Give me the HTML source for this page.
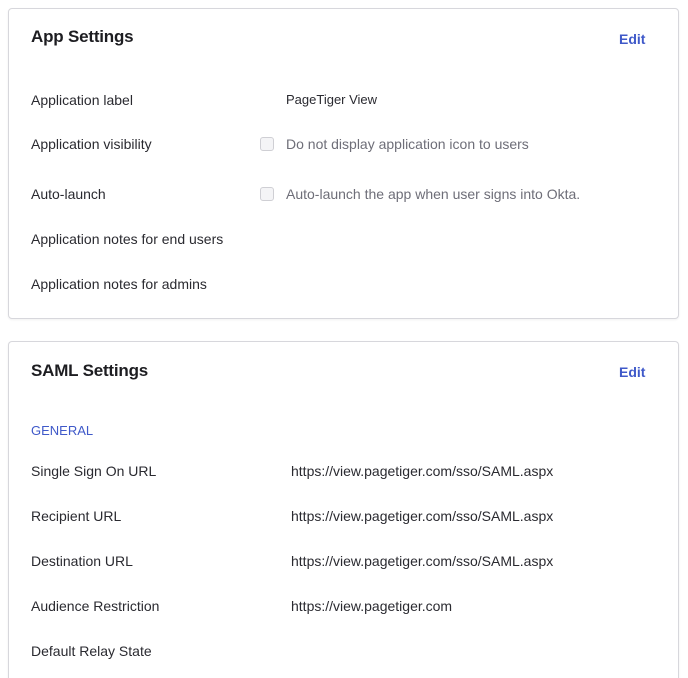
<!DOCTYPE html>
<html style="overflow:hidden;height:678px"><head><style>
body{margin:0;width:688px;height:678px;overflow:hidden;background:#fff;font-family:"Liberation Sans",sans-serif;color:#1d1d21;position:relative}
.card{position:absolute;left:8px;width:669px;border:1px solid #d7d7dc;border-radius:4px;background:#fff;box-shadow:0 1px 2px rgba(0,0,0,.06)}
.t{position:absolute;white-space:nowrap;line-height:1}
.h{font-size:17px;font-weight:bold;left:31px}
.e{font-size:14px;font-weight:bold;color:#3f59c9;left:619px}
.l{font-size:14px;left:31px;color:#2a2a30}
.v{font-size:14px;left:291px;color:#2a2a30}
.c{color:#6e6e78;font-size:14px;left:286px}
.cb{position:absolute;left:260px;width:12px;height:12px;border:1px solid #cfcfd4;border-radius:3px;background:#f4f4f6}
</style></head><body>
<div class="card" style="top:8px;height:309px"></div>
<div class="card" style="top:341px;height:337px;border-bottom:none;border-radius:4px 4px 0 0"></div>
<div class="t h" style="top:28px;letter-spacing:-0.2px">App Settings</div>
<div class="t e" style="top:32px">Edit</div>
<div class="t l" style="top:93px">Application label</div>
<div class="t" style="top:93px;left:286px;font-size:13px;color:#2a2a30">PageTiger View</div>
<div class="t l" style="top:137px">Application visibility</div>
<div class="cb" style="top:137px"></div>
<div class="t c" style="top:137px">Do not display application icon to users</div>
<div class="t l" style="top:187px">Auto-launch</div>
<div class="cb" style="top:187px"></div>
<div class="t c" style="top:187px">Auto-launch the app when user signs into Okta.</div>
<div class="t l" style="top:232px">Application notes for end users</div>
<div class="t l" style="top:277px">Application notes for admins</div>

<div class="t h" style="top:362px;letter-spacing:-0.2px">SAML Settings</div>
<div class="t e" style="top:365px">Edit</div>
<div class="t" style="top:424px;left:31px;font-size:13px;color:#3f59c9">GENERAL</div>
<div class="t l" style="top:464px">Single Sign On URL</div>
<div class="t v" style="top:464px">https://view.pagetiger.com/sso/SAML.aspx</div>
<div class="t l" style="top:509px">Recipient URL</div>
<div class="t v" style="top:509px">https://view.pagetiger.com/sso/SAML.aspx</div>
<div class="t l" style="top:554px">Destination URL</div>
<div class="t v" style="top:554px">https://view.pagetiger.com/sso/SAML.aspx</div>
<div class="t l" style="top:599px">Audience Restriction</div>
<div class="t v" style="top:599px">https://view.pagetiger.com</div>
<div class="t l" style="top:644px">Default Relay State</div>
</body></html>
